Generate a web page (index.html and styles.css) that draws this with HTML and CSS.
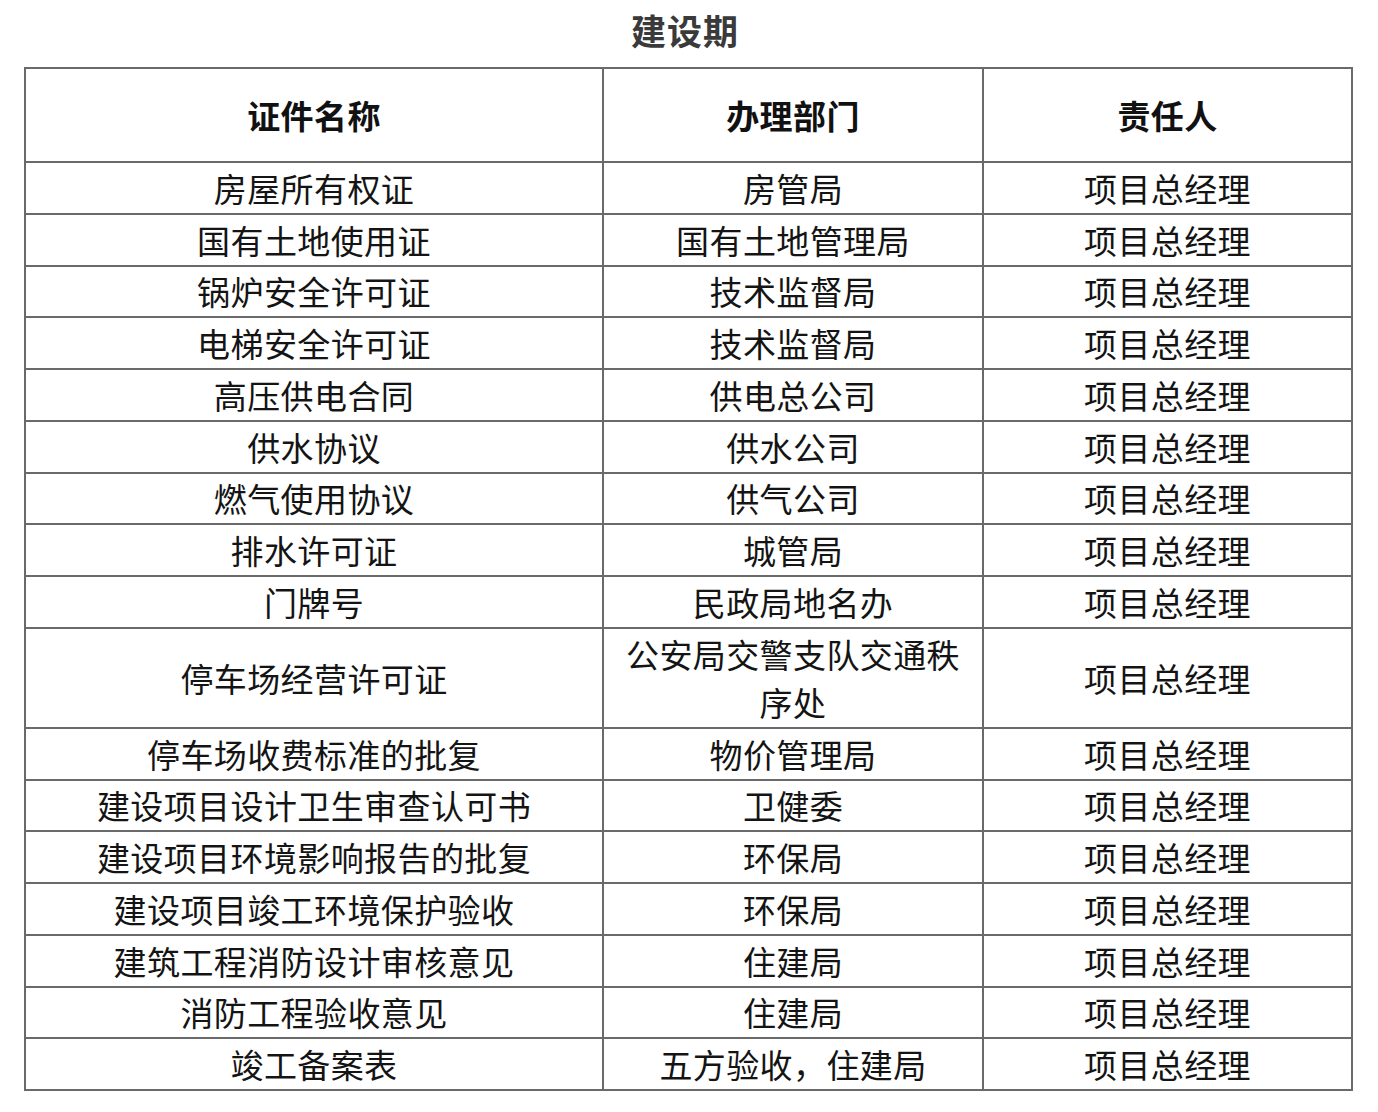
FILE: index.html
```html
<!DOCTYPE html>
<html lang="zh-CN">
<head>
<meta charset="utf-8">
<title>建设期</title>
<link rel="stylesheet" href="styles.css">
</head>
<body>
<div class="page">
  <h1 class="title">建设期</h1>
  <table class="permits">
    <colgroup>
      <col class="c1"><col class="c2"><col class="c3">
    </colgroup>
    <thead>
      <tr><th>证件名称</th><th>办理部门</th><th>责任人</th></tr>
    </thead>
    <tbody>
      <tr><td>房屋所有权证</td><td>房管局</td><td>项目总经理</td></tr>
      <tr><td>国有土地使用证</td><td>国有土地管理局</td><td>项目总经理</td></tr>
      <tr><td>锅炉安全许可证</td><td>技术监督局</td><td>项目总经理</td></tr>
      <tr><td>电梯安全许可证</td><td>技术监督局</td><td>项目总经理</td></tr>
      <tr><td>高压供电合同</td><td>供电总公司</td><td>项目总经理</td></tr>
      <tr><td>供水协议</td><td>供水公司</td><td>项目总经理</td></tr>
      <tr><td>燃气使用协议</td><td>供气公司</td><td>项目总经理</td></tr>
      <tr><td>排水许可证</td><td>城管局</td><td>项目总经理</td></tr>
      <tr><td>门牌号</td><td>民政局地名办</td><td>项目总经理</td></tr>
      <tr class="tall"><td>停车场经营许可证</td><td>公安局交警支队交通秩序处</td><td>项目总经理</td></tr>
      <tr><td>停车场收费标准的批复</td><td>物价管理局</td><td>项目总经理</td></tr>
      <tr><td>建设项目设计卫生审查认可书</td><td>卫健委</td><td>项目总经理</td></tr>
      <tr><td>建设项目环境影响报告的批复</td><td>环保局</td><td>项目总经理</td></tr>
      <tr><td>建设项目竣工环境保护验收</td><td>环保局</td><td>项目总经理</td></tr>
      <tr><td>建筑工程消防设计审核意见</td><td>住建局</td><td>项目总经理</td></tr>
      <tr><td>消防工程验收意见</td><td>住建局</td><td>项目总经理</td></tr>
      <tr><td>竣工备案表</td><td>五方验收，住建局</td><td>项目总经理</td></tr>
    </tbody>
  </table>
</div>
</body>
</html>
```

FILE: styles.css
```css
html, body {
  margin: 0;
  padding: 0;
  background: #fff;
}

.page {
  width: 1378px;
  font-family: "Noto Sans CJK SC", "Noto Sans", sans-serif;
  color: #141414;
}

.title {
  margin: 0;
  height: 67px;
  line-height: 60px;
  text-align: center;
  font-size: 35px;
  font-weight: 700;
  color: #3a3a3a;
  letter-spacing: 1px;
  padding-right: 8px;
  box-sizing: border-box;
}

.permits {
  margin-left: 24px;
  width: 1327px;
  border-collapse: collapse;
  table-layout: fixed;
}

.c1 { width: 578px; }
.c2 { width: 380px; }
.c3 { width: 369px; }

.permits th,
.permits td {
  border: 2px solid #6a6a6a;
  text-align: center;
  vertical-align: middle;
  padding: 0 10px;
  font-size: 33px;
  letter-spacing: 0.4px;
}

.permits th {
  height: 92px;
  font-weight: 700;
  color: #111;
}

.permits td {
  height: 49.75px;
  line-height: 48px;
  font-weight: 400;
}

.permits tr.tall td {
  height: 98px;
}
```
